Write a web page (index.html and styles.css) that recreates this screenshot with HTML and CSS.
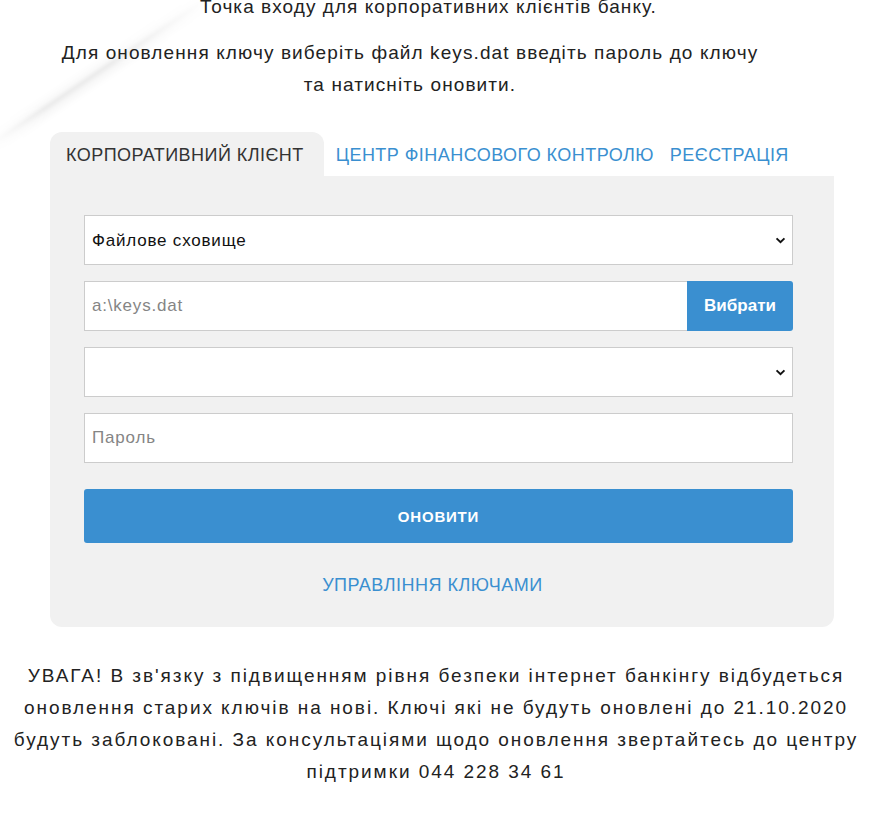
FILE: index.html
```html
<!DOCTYPE html>
<html lang="uk">
<head>
  <meta charset="UTF-8" />
  <meta name="viewport" content="width=device-width, initial-scale=1.0" />
  <title>Корпоративний клієнт - оновлення ключа</title>
  <link rel="stylesheet" href="styles.css">
</head>
<body>
<div class="streak"></div>

<div class="page">
  <p class="lead">Точка входу для корпоративних клієнтів банку.</p>
  <p class="intro">Для оновлення ключу виберіть файл keys.dat введіть пароль до ключу<br>та натисніть оновити.</p>

  <div class="tabs">
    <ul class="tab-list">
      <li class="tab active">КОРПОРАТИВНИЙ КЛІЄНТ</li>
      <li class="tab">ЦЕНТР ФІНАНСОВОГО КОНТРОЛЮ</li>
      <li class="tab">РЕЄСТРАЦІЯ</li>
    </ul>

    <div class="tab-body">
      <form class="key-form" onsubmit="return false">
        <div class="select-wrap">
          <select class="field">
            <option>Файлове сховище</option>
            <option>Токен</option>
          </select>
        </div>

        <div class="input-group">
          <input class="field" type="text" placeholder="a:\keys.dat">
          <button type="button" class="btn-pick">Вибрати</button>
        </div>

        <div class="select-wrap">
          <select class="field">
            <option></option>
          </select>
        </div>

        <input class="field" type="password" placeholder="Пароль">

        <button type="submit" class="btn-update">ОНОВИТИ</button>

        <a href="#" class="keys-link">УПРАВЛІННЯ КЛЮЧАМИ</a>
      </form>
    </div>
  </div>

  <p class="notice">УВАГА! В зв'язку з підвищенням рівня безпеки інтернет банкінгу відбудеться оновлення старих ключів на нові. Ключі які не будуть оновлені до 21.10.2020 будуть заблоковані. За консультаціями щодо оновлення звертайтесь до центру підтримки 044 228 34 61</p>
</div>
</body>
</html>
```

FILE: styles.css
```css
* {
  box-sizing: border-box;
  margin: 0;
  padding: 0;
}

body {
  background: #fff;
  color: #222;
  font-family: 'Liberation Sans', Arial, sans-serif;
  overflow: hidden;
}

/* soft diagonal fold in the top-left corner */
.streak {
  position: absolute;
  left: -35px;
  top: 58px;
  width: 270px;
  height: 26px;
  transform: rotate(-34deg);
  background: linear-gradient(180deg, rgba(0,0,0,0) 0%, rgba(0,0,0,0.02) 35%, rgba(0,0,0,0.09) 50%, rgba(0,0,0,0.03) 65%, rgba(0,0,0,0) 100%);
  -webkit-mask-image: linear-gradient(90deg, transparent 0%, #000 25%, #000 55%, transparent 100%);
  mask-image: linear-gradient(90deg, transparent 0%, #000 25%, #000 55%, transparent 100%);
  filter: blur(1.5px);
  pointer-events: none;
}

.page {
  width: 894px;
  margin-top: -9px;
  position: relative;
}

.lead {
  font-size: 19px;
  letter-spacing: 1.05px;
  line-height: 32px;
  text-align: center;
  padding-right: 37px;
}

.intro {
  font-size: 19px;
  letter-spacing: 1.1px;
  line-height: 32px;
  text-align: center;
  margin-top: 14px;
  padding-right: 74px;
}

.tabs {
  margin: 31px 60px 0 50px;
}

.tab-list {
  list-style: none;
  display: flex;
  align-items: flex-end;
}

.tab {
  font-size: 18px;
  letter-spacing: 0.45px;
  color: #3a8fd0;
  padding: 12px 8px 9px;
  line-height: 23px;
}

.tab.active {
  background: #f1f1f1;
  color: #333;
  border-radius: 12px 12px 0 0;
  padding: 12px 20px 9px 16px;
  margin-right: 4px;
}

.tab-body {
  background: #f1f1f1;
  border-radius: 0 0 12px 12px;
  padding: 39px 41px 30px 34px;
}

.key-form {
  display: flex;
  flex-direction: column;
}

.field {
  display: block;
  width: 100%;
  height: 50px;
  border: 1px solid #ccc;
  background: #fff;
  font-family: inherit;
  font-size: 17px;
  letter-spacing: 0.8px;
  color: #111;
  padding: 0 7px;
  outline: none;
}

.field::placeholder {
  color: #858585;
}

.select-wrap {
  margin-bottom: 16px;
}

select.field {
  appearance: none;
  -webkit-appearance: none;
  background-image: url("data:image/svg+xml;utf8,<svg xmlns='http://www.w3.org/2000/svg' width='12' height='8' viewBox='0 0 12 8'><path d='M1.5 1.5 L6 6 L10.5 1.5' fill='none' stroke='%23111' stroke-width='2.2'/></svg>");
  background-repeat: no-repeat;
  background-position: right 6px center;
  background-size: 11px 7px;
}

.input-group {
  display: flex;
  margin-bottom: 16px;
}

.input-group .field {
  flex: 1;
  border-right: none;
}

.btn-pick {
  width: 106px;
  height: 50px;
  border: none;
  background: #3a8fd0;
  color: #fff;
  font-family: inherit;
  font-size: 17px;
  font-weight: bold;
  border-radius: 0 3px 3px 0;
}

.btn-update {
  margin-top: 26px;
  height: 54px;
  border: none;
  border-radius: 3px;
  background: #3a8fd0;
  color: #fff;
  font-family: inherit;
  font-size: 15px;
  letter-spacing: 0.8px;
  font-weight: bold;
}

.keys-link {
  margin-top: 30px;
  align-self: center;
  font-size: 18px;
  letter-spacing: 0.5px;
  color: #3a8fd0;
  text-decoration: none;
  line-height: 24px;
  margin-right: 12px;
}

.notice {
  font-size: 19px;
  line-height: 32px;
  letter-spacing: 1.95px;
  text-align: center;
  color: #222;
  margin: 33px 30px 0 8px;
}
```
